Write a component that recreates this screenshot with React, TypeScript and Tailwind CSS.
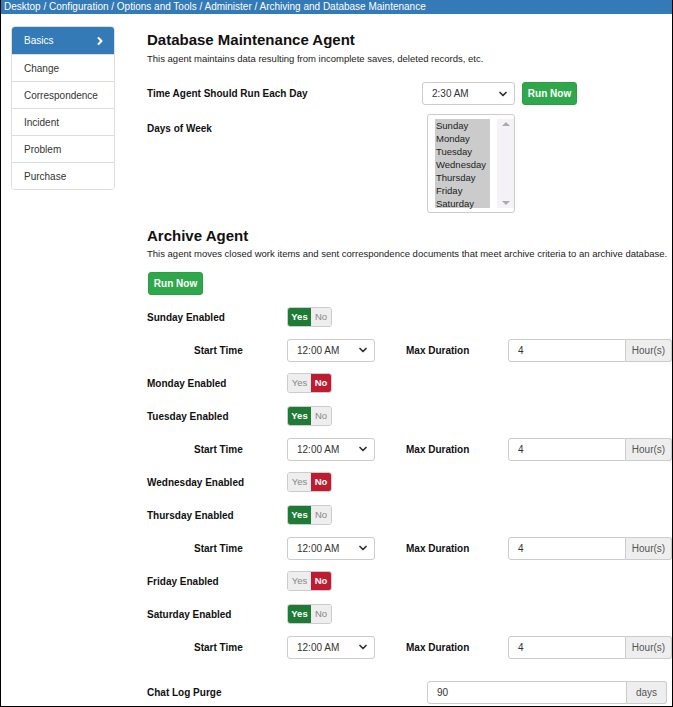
import { ChevronDown, ChevronRight } from "lucide-react";

const font = { fontFamily: '"Liberation Sans", Arial, sans-serif' };

const menu = ["Basics", "Change", "Correspondence", "Incident", "Problem", "Purchase"];
const days = ["Sunday", "Monday", "Tuesday", "Wednesday", "Thursday", "Friday", "Saturday"];
const enabled = [true, false, true, false, true, false, true];

const Select = ({ value, className }: { value: string; className: string }) => (
  <div
    className={`h-[23px] shrink-0 border border-[#ccc] rounded-[3px] bg-white flex items-center pl-[8px] pr-[5px] text-[10px] text-[#333] ${className}`}
  >
    <span className="flex-1 pl-[1px]">{value}</span>
    <ChevronDown className="w-[12px] h-[12px] text-[#333]" strokeWidth={3.5} />
  </div>
);

const Toggle = ({ on }: { on: boolean }) => (
  <div className="flex h-[20px] w-[45px] shrink-0 border border-[#ccc] rounded-[3px] overflow-hidden text-[9.5px]">
    <div
      className={`w-[23px] flex items-center justify-center ${
        on ? "bg-[#1f7a36] text-white font-bold" : "bg-[#eee] text-[#888]"
      }`}
    >
      Yes
    </div>
    <div
      className={`flex-1 flex items-center justify-center ${
        !on ? "bg-[#c01c31] text-white font-bold" : "bg-[#eee] text-[#888]"
      }`}
    >
      No
    </div>
  </div>
);

const RunNow = ({ className }: { className: string }) => (
  <div
    className={`h-[23px] w-[55px] shrink-0 bg-[#2ea84a] border border-[#28a043] rounded-[3px] text-white font-bold text-[10px] flex items-center justify-center ${className}`}
  >
    Run Now
  </div>
);

const InputGroup = ({ value, addon, width, addonWidth }: { value: string; addon: string; width: string; addonWidth: string }) => (
  <div className={`flex h-[23px] shrink-0 ${width}`}>
    <div className="flex-1 border border-[#ccc] rounded-l-[3px] bg-white flex items-center pl-[9px] text-[10px] text-[#333]">
      {value}
    </div>
    <div
      className={`${addonWidth} border border-l-0 border-[#ccc] rounded-r-[3px] bg-[#eee] flex items-center justify-center text-[10px] text-[#555]`}
    >
      {addon}
    </div>
  </div>
);

const App = () => {
  return (
    <div style={font} className="w-[673px] h-[707px] overflow-hidden bg-white border-l border-r border-b border-black">
      <div className="h-[14px] bg-[#337ab7] text-white text-[10px] leading-[14px] pl-[3px] whitespace-nowrap">
        Desktop / Configuration / Options and Tools / Administer / Archiving and Database Maintenance
      </div>

      <div className="flex pt-[12px]">
        <div className="ml-[10px] w-[104px] shrink-0 self-start border border-[#ddd] rounded-[4px] overflow-hidden">
          {menu.map((m, i) => (
            <div
              key={m}
              className={`h-[27px] flex items-center pl-[12px] pr-[8px] text-[10px] ${
                i === 0 ? "bg-[#337ab7] text-white" : "bg-white text-[#333] border-t border-[#ddd]"
              }`}
            >
              <span className="flex-1">{m}</span>
              {i === 0 && <ChevronRight className="w-[12px] h-[12px]" strokeWidth={4} />}
            </div>
          ))}
        </div>

        <div className="ml-[32px] flex-1 min-w-0 text-[#111]">
          <div className="text-[15px] font-bold mt-[4px] leading-[20px]">Database Maintenance Agent</div>
          <div className="text-[9.5px] mt-[2px] text-[#222]">
            This agent maintains data resulting from incomplete saves, deleted records, etc.
          </div>

          <div className="flex items-center mt-[16px]">
            <div className="w-[275px] shrink-0 text-[10px] font-bold">Time Agent Should Run Each Day</div>
            <Select value="2:30 AM" className="w-[93px]" />
            <RunNow className="ml-[7px]" />
          </div>

          <div className="flex mt-[9px]">
            <div className="w-[280px] shrink-0 text-[10px] font-bold pt-[7px]">Days of Week</div>
            <div className="w-[88px] h-[99px] border border-[#ccc] rounded-[3px] flex pl-[7px] pt-[4px] pb-[4px]">
              <div className="w-[55px] bg-[#cbcbcb] text-[9.5px] leading-[13px] text-[#222] pl-[1px]">
                {days.map((d) => (
                  <div key={d}>{d}</div>
                ))}
              </div>
              <div className="flex-1 flex flex-col items-center justify-between py-[3px] bg-[#f4f2f6] ml-[7px]">
                <div className="w-0 h-0 border-l-[4px] border-r-[4px] border-b-[4px] border-l-transparent border-r-transparent border-b-[#aaa]" />
                <div className="w-0 h-0 border-l-[4px] border-r-[4px] border-t-[4px] border-l-transparent border-r-transparent border-t-[#aaa]" />
              </div>
            </div>
          </div>

          <div className="text-[15px] font-bold mt-[13px] leading-[20px]">Archive Agent</div>
          <div className="text-[9.5px] mt-[1px] text-[#222] whitespace-nowrap">
            This agent moves closed work items and sent correspondence documents that meet archive criteria to an archive database.
          </div>
          <RunNow className="mt-[10px] ml-[1px]" />

          <div className="flex flex-col mt-[6px]">
            {days.map((d, i) => (
              <div key={d}>
                <div className="flex items-center h-[33px]">
                  <div className="w-[140px] shrink-0 text-[10px] font-bold">{d} Enabled</div>
                  <Toggle on={enabled[i]} />
                </div>
                {enabled[i] && (
                  <div className="flex items-center h-[33px]">
                    <div className="w-[140px] shrink-0 pl-[47px] text-[10px] font-bold">Start Time</div>
                    <Select value="12:00 AM" className="w-[88px]" />
                    <div className="w-[133px] shrink-0 pl-[31px] text-[10px] font-bold">Max Duration</div>
                    <InputGroup value="4" addon="Hour(s)" width="w-[164px]" addonWidth="w-[46px]" />
                  </div>
                )}
              </div>
            ))}
          </div>

          <div className="flex items-center mt-[17px]">
            <div className="w-[280px] shrink-0 text-[10px] font-bold">Chat Log Purge</div>
            <InputGroup value="90" addon="days" width="w-[240px]" addonWidth="w-[40px]" />
          </div>
        </div>
      </div>
    </div>
  );
};

export default App;
